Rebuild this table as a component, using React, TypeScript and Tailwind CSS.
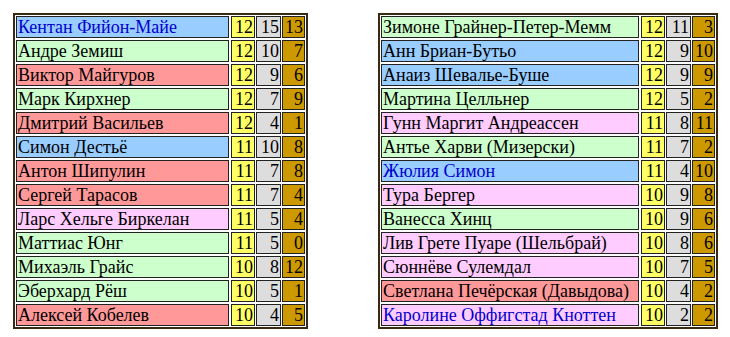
type Row = { name: string; bg: string; blue?: boolean; n: [number, number, number] };

const BG: Record<string, string> = {
  b: "bg-[#99ccff]",
  g: "bg-[#ccffcc]",
  r: "bg-[#ff9999]",
  p: "bg-[#ffccff]",
};

const left: Row[] = [
  { name: "Кентан Фийон-Майе", bg: "b", blue: true, n: [12, 15, 13] },
  { name: "Андре Земиш", bg: "g", n: [12, 10, 7] },
  { name: "Виктор Майгуров", bg: "r", n: [12, 9, 6] },
  { name: "Марк Кирхнер", bg: "g", n: [12, 7, 9] },
  { name: "Дмитрий Васильев", bg: "r", n: [12, 4, 1] },
  { name: "Симон Дестьё", bg: "b", n: [11, 10, 8] },
  { name: "Антон Шипулин", bg: "r", n: [11, 7, 8] },
  { name: "Сергей Тарасов", bg: "r", n: [11, 7, 4] },
  { name: "Ларс Хельге Биркелан", bg: "p", n: [11, 5, 4] },
  { name: "Маттиас Юнг", bg: "g", n: [11, 5, 0] },
  { name: "Михаэль Грайс", bg: "g", n: [10, 8, 12] },
  { name: "Эберхард Рёш", bg: "g", n: [10, 5, 1] },
  { name: "Алексей Кобелев", bg: "r", n: [10, 4, 5] },
];

const right: Row[] = [
  { name: "Зимоне Грайнер-Петер-Мемм", bg: "g", n: [12, 11, 3] },
  { name: "Анн Бриан-Бутьо", bg: "b", n: [12, 9, 10] },
  { name: "Анаиз Шевалье-Буше", bg: "b", n: [12, 9, 9] },
  { name: "Мартина Целльнер", bg: "g", n: [12, 5, 2] },
  { name: "Гунн Маргит Андреассен", bg: "p", n: [11, 8, 11] },
  { name: "Антье Харви (Мизерски)", bg: "g", n: [11, 7, 2] },
  { name: "Жюлия Симон", bg: "b", blue: true, n: [11, 4, 10] },
  { name: "Тура Бергер", bg: "p", n: [10, 9, 8] },
  { name: "Ванесса Хинц", bg: "g", n: [10, 9, 6] },
  { name: "Лив Грете Пуаре (Шельбрай)", bg: "p", n: [10, 8, 6] },
  { name: "Сюннёве Сулемдал", bg: "p", n: [10, 7, 5] },
  { name: "Светлана Печёрская (Давыдова)", bg: "r", n: [10, 4, 2] },
  { name: "Каролине Оффигстад Кноттен", bg: "p", blue: true, n: [10, 2, 2] },
];

const cell = "h-[22px] border border-[#222] flex items-center leading-none overflow-hidden whitespace-nowrap";

function Table({ rows, nameW }: { rows: Row[]; nameW: string }) {
  return (
    <div className="border-2 border-[#3b2a12] p-px bg-white">
      <div className="flex flex-col gap-y-[2px]">
        {rows.map((r) => (
          <div key={r.name} className="flex">
            <div
              className={`${cell} ${nameW} ${BG[r.bg]} pl-px ${r.blue ? "text-[#0000cc]" : "text-black"}`}
            >
              {r.name}
            </div>
            <div className="w-[2px]" />
            <div className={`${cell} w-[24px] bg-[#ffff66] justify-end pr-px`}>{r.n[0]}</div>
            <div className="w-px" />
            <div className={`${cell} w-[25px] bg-[#dddddd] justify-end pr-px`}>{r.n[1]}</div>
            <div className="w-px" />
            <div className={`${cell} w-[23px] bg-[#cc9900] justify-end pr-px`}>{r.n[2]}</div>
          </div>
        ))}
      </div>
    </div>
  );
}

export default function App() {
  return (
    <div className="w-[730px] h-[337px] bg-white font-['Liberation_Serif','Times_New_Roman',serif] text-[18px] text-black flex items-start pt-[13px] pl-[13px]">
      <Table rows={left} nameW="w-[213px]" />
      <div className="w-[70px]" />
      <Table rows={right} nameW="w-[258px]" />
    </div>
  );
}
